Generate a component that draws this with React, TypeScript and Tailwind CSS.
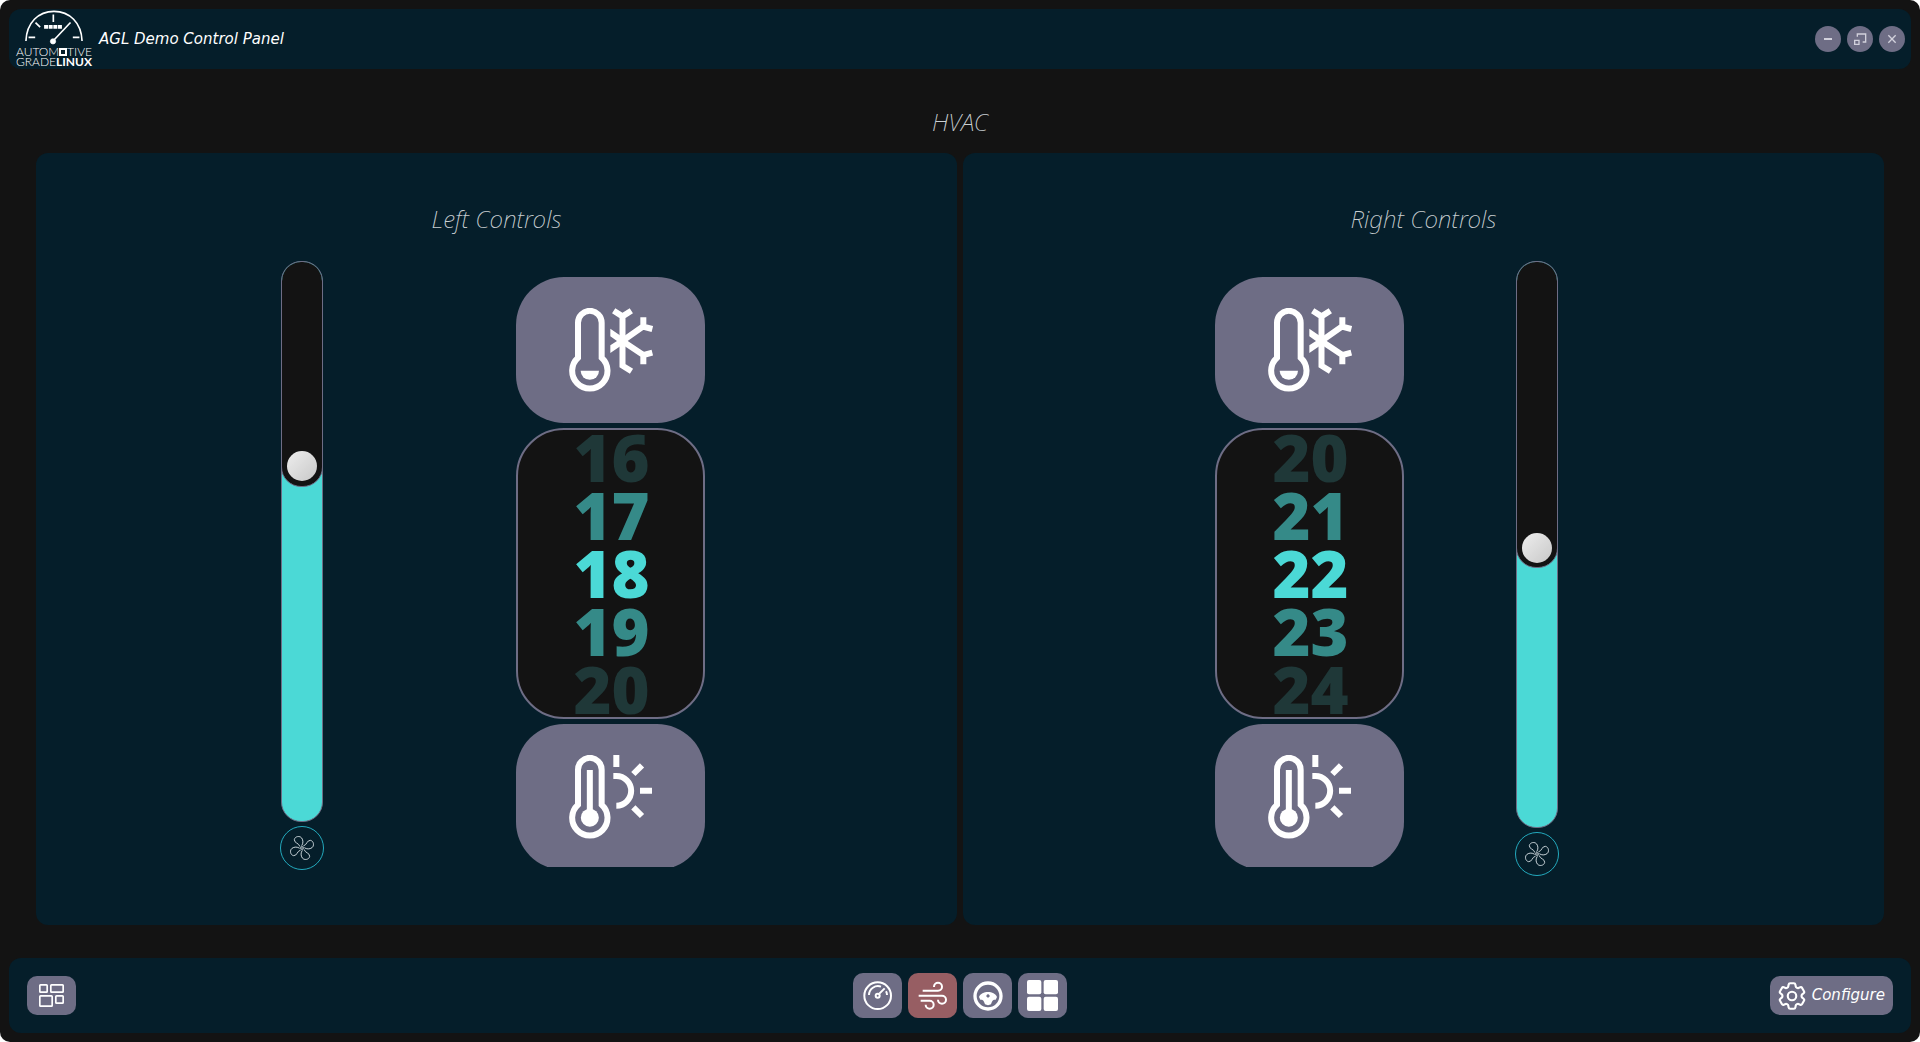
import { useState } from 'react'
import type { ReactNode } from 'react'
import { HiOutlineCog6Tooth } from 'react-icons/hi2'

function AglLogo() {
  return (
    <div className="mb-[2px] flex w-[76px] flex-col items-center font-['Lato'] text-[12px] leading-[10px] text-white">
      <svg viewBox="72 28 186 106" className="h-[35px] w-[62px]" fill="none" stroke="white" strokeWidth="5">
        <path d="M80 122C82 66 118 32 165 32S248 66 250 122" />
        <path d="M88 111h20M222 111h20M163 42v22M109 66l14 14" />
        <path d="M162 122L215 66" />
        <circle cx="162" cy="123" r="8" fill="white" strokeWidth="2" />
        <path d="M135 79h54" strokeWidth="11" strokeDasharray="12 2" />
      </svg>
      <div className="mt-[2px] flex w-full items-center justify-between font-light">
        <span>AUTOM</span>
        <span className="size-[8px] border-2 border-white" />
        <span>TIVE</span>
      </div>
      <div className="flex w-full items-center justify-between">
        <span className="font-light">GRADE</span>
        <span className="font-bold">LINUX</span>
      </div>
    </div>
  )
}

function WindowButton({ label, children }: { label: string; children: ReactNode }) {
  return (
    <button aria-label={label} className="flex size-[26px] items-center justify-center rounded-full bg-[#6e6d85]">
      <svg viewBox="0 0 78 78" className="size-[26px]" fill="none" stroke="#d2d1dc" strokeWidth="4">
        {children}
      </svg>
    </button>
  )
}

function ColdIcon() {
  return (
    <svg viewBox="507 353 252 252" className="size-[84px]" fill="none" stroke="white" strokeWidth="18">
      <path d="M534 502V397a35.500 35.500 0 0 1 71 0V502a53 53 0 1 1-71 0Z" />
      <path d="M542 541h55a27 27 0 0 1-55 0z" fill="white" stroke="none" />
      <path d="M641 361l26.500 17 26.500-17M667.500 375V526l27 17" />
      <path d="M667 452L730 408M730 381v28l27 7M667 452L730 494M730 522v-28l27-7" />
      <path d="M631 415v23l20 14-20 13v23l44-30v-13z" fill="white" stroke="none" />
    </svg>
  )
}

function HotIcon() {
  return (
    <svg viewBox="207 135 252 252" className="size-[84px]" fill="none" stroke="white" strokeWidth="18">
      <path d="M234 284V179a35.500 35.500 0 0 1 71 0V284a53 53 0 1 1-71 0Z" />
      <path d="M269.500 180V310" />
      <circle cx="269.500" cy="323" r="27" fill="white" stroke="none" />
      <path d="M340 198h9a44.500 44.500 0 0 1 0 89" />
      <path d="M349 135v36M400 192l26-26M420 242h36M400 292l26 26" />
    </svg>
  )
}

const blade = 'M124 200C129 193 129 184 124 177C119 170 104 171 102 182C102 193 115 191 119 203'

function FanIcon() {
  return (
    <svg viewBox="89 171 72 72" className="size-6" fill="none" stroke="#c9d3d8" strokeWidth="3">
      <path d={blade} />
      <path d={blade} transform="rotate(90 125 207)" />
      <path d={blade} transform="rotate(180 125 207)" />
      <path d={blade} transform="rotate(270 125 207)" />
      <circle cx="125" cy="207" r="4" />
    </svg>
  )
}

function FanSlider({ label, initial }: { label: string; initial: number }) {
  const [value, setValue] = useState(initial)
  const empty = 1 - value / 255
  return (
    <div className="flex h-full flex-col items-center gap-1">
      <div className="relative w-[42px] flex-1 overflow-hidden rounded-[20px] border border-[#6e6d85] bg-[#4bd9d6]">
        <div
          className="absolute -inset-x-px -top-px rounded-[20px] border border-[#6e6d85] bg-[#131313]"
          style={{ height: `calc(41px + ${empty} * (100% - 40px))` }}
        />
        <input
          type="range"
          min={0}
          max={255}
          value={value}
          aria-label={label}
          onChange={(e) => setValue(Number(e.target.value))}
          className="absolute inset-0 m-0 h-full w-full appearance-none bg-transparent py-[5px] [direction:rtl] [writing-mode:vertical-lr] [&::-webkit-slider-thumb]:size-[30px] [&::-webkit-slider-thumb]:appearance-none [&::-webkit-slider-thumb]:rounded-full [&::-webkit-slider-thumb]:bg-linear-to-br [&::-webkit-slider-thumb]:from-[#eeeeee] [&::-webkit-slider-thumb]:to-[#c8c8c8]"
        />
      </div>
      <div className="flex size-[44px] items-center justify-center rounded-full border border-[#23a9bd]">
        <FanIcon />
      </div>
    </div>
  )
}

const tones = ['text-[#1f3838]', 'text-[#358a88]', 'text-[#4bd9d6]', 'text-[#358a88]', 'text-[#1f3838]']

function Temperature({ side, initial }: { side: string; initial: number }) {
  const [temp, setTemp] = useState(initial)
  return (
    <div className="flex h-[590px] flex-col gap-[5px] overflow-hidden">
      <button
        aria-label={`${side} cooler`}
        onClick={() => setTemp(temp - 1)}
        className="flex h-[146px] shrink-0 items-center justify-center rounded-[48px] bg-[#6e6d85]"
      >
        <ColdIcon />
      </button>
      <div className="flex h-[291px] shrink-0 flex-col items-center justify-center rounded-[48px] border-2 border-[#6e6d85] bg-[#131313] pb-[2px] pl-[2px] font-['Noto_Sans'] text-[65px] leading-[58px] font-black">
        {tones.map((tone, i) => (
          <div key={i} className={tone}>
            {temp - 2 + i}
          </div>
        ))}
      </div>
      <button
        aria-label={`${side} warmer`}
        onClick={() => setTemp(temp + 1)}
        className="flex h-[146px] shrink-0 items-center justify-center rounded-[48px] bg-[#6e6d85]"
      >
        <HotIcon />
      </button>
    </div>
  )
}

const headingFont = "text-center font-['Noto_Sans'] text-[24px] leading-[33px] font-extralight italic text-[#c9cfd2]"

function NavButton({ label, active, children }: { label: string; active?: boolean; children: ReactNode }) {
  return (
    <button
      aria-label={label}
      className={`flex h-[45px] w-[49px] items-center justify-center rounded-[10px] ${active ? 'bg-[#975e63]' : 'bg-[#6e6d85]'}`}
    >
      {children}
    </button>
  )
}

export default function App() {
  return (
    <div className="bg-white font-['DejaVu_Sans',sans-serif]">
      <div className="flex min-h-screen flex-col rounded-[10px] bg-[#131313] p-[9px]">
        <header className="flex h-[60px] items-center gap-[7px] rounded-[12px] bg-[#051e2a] pr-[6px] pl-[7px]">
          <AglLogo />
          <h1 className="flex-1 text-[15px] text-white italic">AGL Demo Control Panel</h1>
          <div className="flex gap-[6px]">
            <WindowButton label="Minimize">
              <path d="M27 39h24" strokeWidth="6" />
            </WindowButton>
            <WindowButton label="Restore">
              <path d="M31 32v-8h25v24h-9M23 43h13v12h-13z" />
            </WindowButton>
            <WindowButton label="Close">
              <path d="M28 28l22 22M50 28l-22 22" />
            </WindowButton>
          </div>
        </header>

        <main className="flex flex-1 flex-col px-[27px] pt-9 pb-[33px]">
          <h2 className={headingFont}>HVAC</h2>
          <div className="mt-[15px] grid flex-1 grid-cols-2 gap-[6px]">
            <section className="flex flex-col rounded-[12px] bg-[#051e2a] pt-[49px] pb-[55px]">
              <h3 className={headingFont}>Left Controls</h3>
              <div className="mt-[26px] grid flex-1 grid-cols-[244fr_44px_192fr_189px_252fr]">
                <div className="col-start-2">
                  <FanSlider label="Left fan speed" initial={164} />
                </div>
                <div className="col-start-4 pt-4">
                  <Temperature side="Left" initial={18} />
                </div>
              </div>
            </section>
            <section className="flex flex-col rounded-[12px] bg-[#051e2a] pt-[49px] pb-[49px]">
              <h3 className={headingFont}>Right Controls</h3>
              <div className="mt-[26px] grid flex-1 grid-cols-[252fr_189px_111fr_44px_325fr]">
                <div className="col-start-2 pt-4">
                  <Temperature side="Right" initial={22} />
                </div>
                <div className="col-start-4">
                  <FanSlider label="Right fan speed" initial={126} />
                </div>
              </div>
            </section>
          </div>
        </main>

        <footer className="grid h-[75px] grid-cols-[1fr_auto_1fr] items-center rounded-[12px] bg-[#051e2a] px-[18px]">
          <button
            aria-label="Dashboard"
            className="flex h-[39px] w-[49px] items-center justify-center rounded-[10px] bg-[#6e6d85]"
          >
            <svg viewBox="117 252 75 69" className="h-[23px] w-[25px]" fill="none" stroke="white" strokeWidth="5">
              <rect x="119.500" y="254.500" width="22" height="22" rx="2" />
              <rect x="152.500" y="254.500" width="37" height="22" rx="2" />
              <rect x="119.500" y="287.500" width="37" height="31" rx="2" />
              <rect x="167.500" y="287.500" width="22" height="22" rx="2" />
            </svg>
          </button>
          <nav className="flex gap-[6px]">
            <NavButton label="Instrument cluster">
              <svg viewBox="66 77 90 90" className="size-[30px]" fill="none" stroke="white" strokeWidth="6">
                <circle cx="110" cy="121" r="40" />
                <path d="M84 119a27 27 0 0 1 36-25M135 108q3 5 3 11" />
                <circle cx="110" cy="121" r="6" />
                <path d="M115 115l16-16" />
              </svg>
            </NavButton>
            <NavButton label="HVAC" active>
              <svg viewBox="232 76 90 90" className="size-[30px]" fill="none" stroke="white" strokeWidth="6">
                <path d="M246 105H292a12 12 0 1 0-12-12v1" />
                <path d="M234 120H304a12 12 0 1 1-12 12v1" />
                <path d="M240 135H267a12 12 0 1 1-12 12v1" />
              </svg>
            </NavButton>
            <NavButton label="Steering controls">
              <svg viewBox="397 76 90 90" className="size-[30px]" fill="none" stroke="white" strokeWidth="10">
                <circle cx="442" cy="121" r="39" />
                <path
                  fillRule="evenodd"
                  d="M415 124C419 114 430 109 442 109S465 114 469 124L465 132H460C454 134 453 141 451 146Q442 151 433 146C431 141 430 134 424 132H419ZM442 116a5 5 0 1 0 .1 0Z"
                  fill="white"
                  stroke="none"
                />
              </svg>
            </NavButton>
            <NavButton label="Applications">
              <svg viewBox="561 75 93 93" className="size-[31px]" fill="white">
                <rect x="561" y="75" width="43" height="43" rx="6" />
                <rect x="611" y="75" width="43" height="43" rx="6" />
                <rect x="561" y="125" width="43" height="43" rx="6" />
                <rect x="611" y="125" width="43" height="43" rx="6" />
              </svg>
            </NavButton>
          </nav>
          <button className="flex h-[39px] items-center gap-[3px] justify-self-end rounded-[10px] bg-[#6e6d85] pr-2 pl-[5px] text-[15px] text-white italic">
            <HiOutlineCog6Tooth className="size-[34px]" />
            Configure
          </button>
        </footer>
      </div>
    </div>
  )
}
